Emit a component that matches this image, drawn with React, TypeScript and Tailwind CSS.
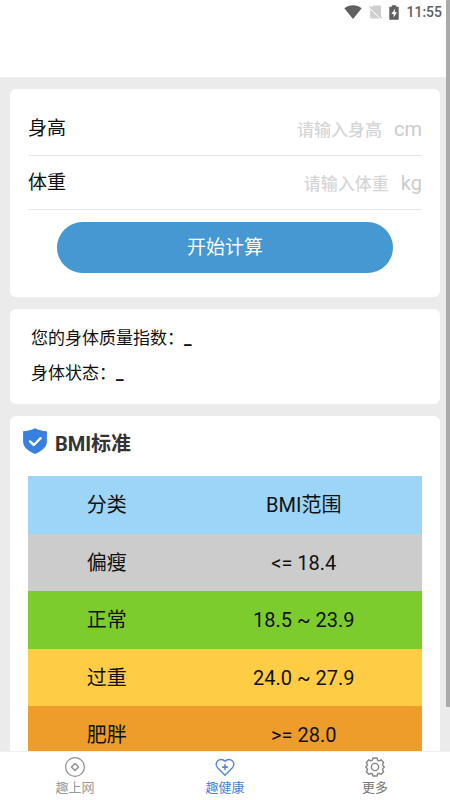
import React, { useState } from 'react';

const levels = [
  { name: '偏瘦', range: '<= 18.4', color: 'bg-[#cccccc]' },
  { name: '正常', range: '18.5 ~ 23.9', color: 'bg-[#7dcc2e]' },
  { name: '过重', range: '24.0 ~ 27.9', color: 'bg-[#ffcc44]' },
  { name: '肥胖', range: '>= 28.0', color: 'bg-[#ef9d2a]' },
];

const StatusBar: React.FC = () => (
  <div className="flex items-center justify-end gap-[7px] h-6 pr-2 text-[#606060]">
    <svg className="w-[18px] h-[14px]" viewBox="0 0 18 14" fill="currentColor">
      <path d="M9 14L0.3 3.2C2.8 1.2 5.8 0.2 9 0.2s6.200 1 8.700 3z" />
    </svg>
    <svg className="w-[13px] h-[14px]" viewBox="0 0 13 14">
      <path d="M4.500 0.500H12V12.200L2.200 2.600zM1.200 4L10.500 13.500H1.200z" fill="#cfcfcf" />
      <path d="M0.400 1.200L12.600 13.400" stroke="#bdbdbd" strokeWidth="1.100" />
    </svg>
    <svg className="w-[10px] h-[15px]" viewBox="2 0 10 15" fill="currentColor">
      <path d="M4.800 0.300h4.400v1.500h2.500v12.900h-9.400V1.800h2.500z" />
      <path d="M8.300 3.600L4.300 9h2.300v3.400L10 7.200H7.700z" fill="#fff" />
    </svg>
    <span className="text-sm leading-6 font-medium">11:55</span>
  </div>
);

const ShieldIcon: React.FC = () => (
  <svg className="w-6 h-[26px]" viewBox="0 0 24 26" fill="none">
    <path d="M12 0.200C15.500 2 19.500 3 23.900 3.200V13.500C23.900 19.500 18 23.600 12 25.900C6 23.600 0.100 19.500 0.100 13.500V3.200C4.500 3 8.500 2 12 0.200z" fill="#3880df" />
    <path d="M7 13.400L10.900 17L17.600 10.200" stroke="#fff" strokeWidth="2.400" strokeLinecap="round" strokeLinejoin="round" />
  </svg>
);

const CoinIcon: React.FC = () => (
  <svg className="w-5 h-5" viewBox="0 0 20 20" fill="none" stroke="#8f8f8f" strokeWidth="1.200">
    <circle cx="10" cy="10" r="9.400" />
    <path d="M10 6.400L13.600 10L10 13.600L6.400 10z" strokeWidth="1.400" strokeLinejoin="round" />
  </svg>
);

const HeartIcon: React.FC = () => (
  <svg className="w-5 h-5" viewBox="0 0 20 20" fill="none" stroke="#5b84d6" strokeWidth="1.400" strokeLinejoin="round" strokeLinecap="round">
    <path d="M10 18.200L2.600 10.800C0.700 8.800 0.700 5.700 2.600 3.900C4.600 2 7.900 2 10 4.300C12.100 2 15.400 2 17.400 3.900C19.300 5.700 19.300 8.800 17.400 10.800z" />
    <path d="M10 7.700v4.800M7.600 10.100h4.800" strokeWidth="1.600" />
  </svg>
);

const GearIcon: React.FC = () => (
  <svg className="w-5 h-5" viewBox="0 0 20 20" fill="none" stroke="#868686" strokeWidth="1.400" strokeLinejoin="round">
    <path d="M8 1h4l0.600 2.100 1.500 0.700 2-1 2.500 2.700-1 2 0.500 1.500L19.400 10l-1.300 1.300-0.500 1.300 1 2.100-2.500 2.600-2-1-1.500 0.700L12 19H8l-0.600-2-1.500-0.700-2 1-2.500-2.600 1-2.100-0.500-1.300L0.700 10l1.200-1 0.500-1.500-1-2L3.900 2.800l2 1 1.500-0.700z" />
    <circle cx="10" cy="10" r="3.600" />
  </svg>
);

const App: React.FC = () => {
  const [height, setHeight] = useState('');
  const [weight, setWeight] = useState('');
  const [bmi, setBmi] = useState<number | null>(null);

  const calculate = () => {
    const h = Number(height) / 100;
    const w = Number(weight);
    setBmi(h > 0 && w > 0 ? w / (h * h) : null);
  };

  const status = () => {
    if (bmi === null) return '_';
    if (bmi < 18.5) return '偏瘦';
    if (bmi < 24) return '正常';
    if (bmi < 28) return '过重';
    return '肥胖';
  };

  return (
    <div className="relative h-screen flex flex-col bg-[#ebebeb] text-[#111111] font-[Roboto,'Noto_Sans_CJK_SC',sans-serif]">
      <header className="shrink-0 h-[77px] bg-white">
        <StatusBar />
      </header>

      <main className="flex-1 min-h-0 overflow-hidden flex flex-col gap-3 pt-3 px-2.5">
        {/* Input form */}
        <section className="shrink-0 bg-white rounded-md px-[18px] pt-[13px] pb-6">
          <div className="flex items-center h-[54px] border-b border-[#e6e6e6]">
            <label htmlFor="height" className="pt-0.5 text-[19px]">身高</label>
            <input
              id="height"
              value={height}
              onChange={(e) => setHeight(e.target.value)}
              placeholder="请输入身高"
              className="flex-1 min-w-0 pt-1 text-right text-[17px] font-medium outline-none placeholder:text-[#d6d6d6]"
            />
            <span className="pl-3 text-xl text-[#cccccc]">cm</span>
          </div>
          <div className="flex items-center h-[54px] border-b border-[#e6e6e6]">
            <label htmlFor="weight" className="pt-0.5 text-[19px]">体重</label>
            <input
              id="weight"
              value={weight}
              onChange={(e) => setWeight(e.target.value)}
              placeholder="请输入体重"
              className="flex-1 min-w-0 pt-1 text-right text-[17px] font-medium outline-none placeholder:text-[#d6d6d6]"
            />
            <span className="pl-3 text-xl text-[#cccccc]">kg</span>
          </div>
          <div className="px-[29px] pt-3">
            <button type="button" onClick={calculate} className="block w-full h-[51px] pt-0.5 rounded-full bg-[#4598d2] text-white text-[19px]">
              开始计算
            </button>
          </div>
        </section>

        {/* Result */}
        <section className="shrink-0 bg-white rounded-md px-[21px] pt-3 pb-[13px] text-[17px] leading-[35px]">
          <p>您的身体质量指数：<span className="font-bold">{bmi === null ? '_' : bmi.toFixed(1)}</span></p>
          <p>身体状态：<span className="font-bold">{status()}</span></p>
        </section>

        {/* BMI table */}
        <section className="shrink-0 bg-white rounded-md px-[18px] pt-3 pb-6">
          <div className="flex gap-2 h-12 -ml-[5px]">
            <ShieldIcon />
            <h2 className="text-xl leading-8 font-bold text-[#333333]">BMI标准</h2>
          </div>
          <table className="w-full table-fixed text-center text-xl">
            <thead>
              <tr className="h-[58px] bg-[#9cd5f7]">
                <th className="w-2/5 font-normal">分类</th>
                <th className="font-normal">BMI范围</th>
              </tr>
            </thead>
            <tbody>
              {levels.map((level) => (
                <tr key={level.name} className={`h-[57px] even:h-[58px] ${level.color}`}>
                  <td>{level.name}</td>
                  <td>{level.range}</td>
                </tr>
              ))}
            </tbody>
          </table>
        </section>
      </main>

      <nav className="shrink-0 h-[49px] flex bg-white border-t border-[#f0f0f0] text-[13px] leading-5">
        <a href="#surf" className="flex-1 flex flex-col items-center gap-px pt-[5px] text-[#999999]">
          <CoinIcon />
          趣上网
        </a>
        <a href="#health" className="flex-1 flex flex-col items-center gap-px pt-[5px] text-[#3f86dc]">
          <HeartIcon />
          趣健康
        </a>
        <a href="#more" className="flex-1 flex flex-col items-center gap-px pt-[5px] text-[#777777]">
          <GearIcon />
          更多
        </a>
      </nav>

      <div className="absolute top-0 right-0 w-1 h-[707px] bg-[#aaaaaa]" />
    </div>
  );
};

export default App;
